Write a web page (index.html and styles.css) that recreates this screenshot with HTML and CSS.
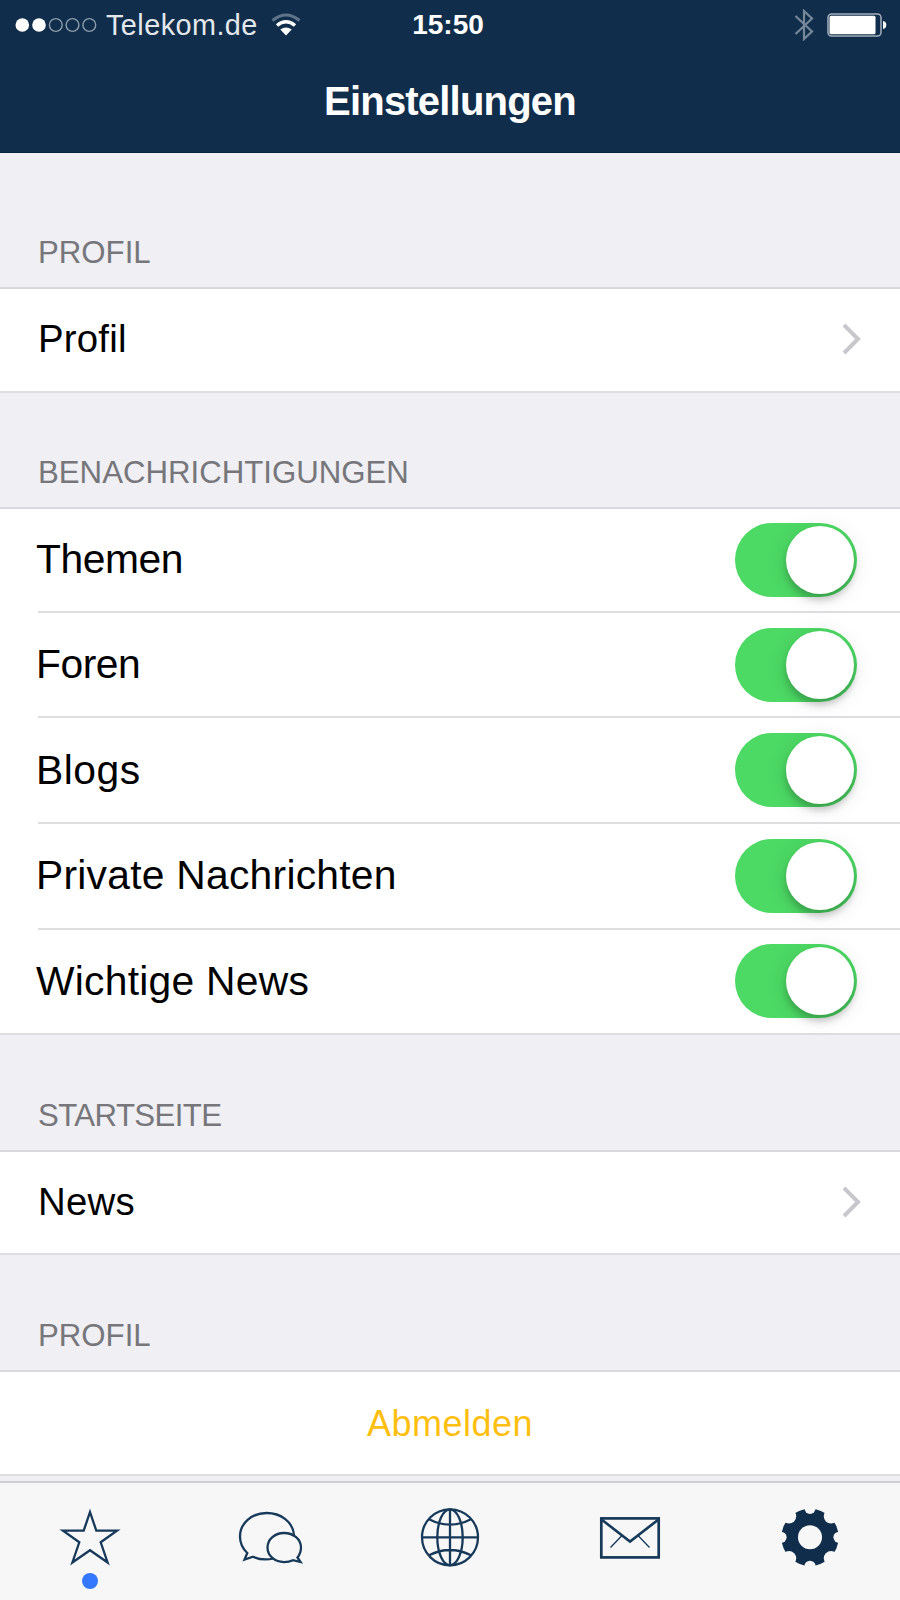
FILE: index.html
```html
<!DOCTYPE html>
<html lang="de">

<head>
  <title>Einstellungen</title>
  <meta charset="utf-8" />
  <meta name="viewport" content="width=device-width, initial-scale=1.0" />
  <link rel="stylesheet" href="styles.css">
</head>

<body>
  <header class="top">
    <div class="status">
      <div class="status-left">
        <svg class="signal" width="84" height="16" viewBox="0 0 84 16">
          <circle cx="7.3" cy="8" r="6.8" fill="#fff" />
          <circle cx="24" cy="8" r="6.8" fill="#fff" />
          <g fill="none" stroke="#8c9cab" stroke-width="1.4">
            <circle cx="40.8" cy="8" r="6.4" />
            <circle cx="57.5" cy="8" r="6.4" />
            <circle cx="74.3" cy="8" r="6.4" />
          </g>
        </svg>
        <span class="carrier">Telekom.de</span>
        <svg class="wifi" width="30" height="24" viewBox="0 0 30 24">
          <path d="M1.5 7.5Q15-3.5 28.5 7.5" fill="none" stroke="#5f7489" stroke-width="3" />
          <path d="M6 12.5Q15 5 24 12.5" fill="none" stroke="#fff" stroke-width="3.4" />
          <path d="M9.3 16.5Q15 12.5 20.7 16.5L15 22.5z" fill="#fff" />
        </svg>
      </div>
      <span class="time">15:50</span>
      <div class="status-right">
        <svg width="20" height="32" viewBox="0 0 20 32">
          <path d="M1.5 7L18 22.5L10 30V2L18 9.5L1.5 25" fill="none" stroke="#76889a" stroke-width="2.2" />
        </svg>
        <svg width="60" height="24" viewBox="0 0 60 24">
          <rect x="1" y="1" width="53" height="22" rx="3.5" fill="none" stroke="#a3b0bc" stroke-width="1.5" />
          <rect x="2.5" y="2.7" width="46" height="18.6" rx="1.5" fill="#fff" />
          <path d="M56 8Q59.3 8.5 59.3 12T56 16z" fill="#fff" />
        </svg>
      </div>
    </div>
    <h1>Einstellungen</h1>
  </header>

  <main>
    <h2 class="first">PROFIL</h2>
    <ul>
      <li class="link">Profil
        <svg class="chevron" width="20" height="32" viewBox="0 0 20 32">
          <path d="M2 2L16 16L2 30" />
        </svg>
      </li>
    </ul>

    <h2>BENACHRICHTIGUNGEN</h2>
    <ul class="switches">
      <li class="tight">Themen<span class="switch"></span></li>
      <li class="tight">Foren<span class="switch"></span></li>
      <li class="wide">Blogs<span class="switch"></span></li>
      <li>Private Nachrichten<span class="switch"></span></li>
      <li>Wichtige News<span class="switch"></span></li>
    </ul>

    <h2 class="start">STARTSEITE</h2>
    <ul>
      <li class="link">News
        <svg class="chevron" width="20" height="32" viewBox="0 0 20 32">
          <path d="M2 2L16 16L2 30" />
        </svg>
      </li>
    </ul>

    <h2>PROFIL</h2>
    <ul>
      <li class="logout">Abmelden</li>
    </ul>
  </main>

  <nav class="tabs">
    <svg viewBox="0 0 180 116">
      <path d="M90 28L96.3 46.7H117L100.7 58.3L107.6 78.5L90 66.2L72.4 78.5L79.3 58.3L63 46.7H83.7z" />
      <circle class="dot" cx="90" cy="97" r="8" />
    </svg>
    <svg viewBox="0 0 180 116">
      <path d="M114 51C113 38 101 29 86.5 29C71.5 29 60 39.5 60 52.5C60 59 62.5 64.5 67.3 69L64.5 75.5L73 72.7C79 75.5 87 76 93.5 74.5" />
      <path d="M117.5 73.5L120.5 78L113 76.2C110 77.7 107 78.1 104 78.1C95 78.1 87.5 72 87.5 63.5C87.5 55 95 49 104 49C113.5 49 121 55 121 63.5C121 67.5 119.5 71 117.5 73.5z" />
    </svg>
    <svg viewBox="0 0 180 116">
      <circle cx="90" cy="53.3" r="28" />
      <ellipse cx="90" cy="53.3" rx="12.7" ry="28" />
      <path d="M90 25.3V81.3M62 53.3H118M69 35.3Q90 46 111 35.3M69 71.3Q90 60.7 111 71.3" />
    </svg>
    <svg viewBox="0 0 180 116">
      <rect x="61.3" y="34.4" width="57.4" height="39" stroke-width="2.7" />
      <path d="M61.5 35.5L90 57.5L118.5 35.5" stroke-width="2.6" />
      <path d="M82 51.5L70.5 63.5M98 51.5L109.5 63.5" stroke-width="1.3" />
    </svg>
    <svg viewBox="0 0 180 116">
      <circle class="gear" cx="90" cy="53.3" r="28.6" />
      <g class="cut">
        <circle cx="90" cy="53.3" r="12" />
        <circle cx="90" cy="24.3" r="5.6" />
        <circle cx="90" cy="82.3" r="5.6" />
        <circle cx="61" cy="53.3" r="5.6" />
        <circle cx="119" cy="53.3" r="5.6" />
        <circle cx="111" cy="32.3" r="7.2" />
        <circle cx="111" cy="74.3" r="7.2" />
        <circle cx="69" cy="32.3" r="7.2" />
        <circle cx="69" cy="74.3" r="7.2" />
      </g>
    </svg>
  </nav>
</body>

</html>
```
FILE: styles.css
```css
* {
  box-sizing: border-box;
}

body {
  margin: 0;
  width: 900px;
  height: 1600px;
  display: flex;
  flex-direction: column;
  overflow: hidden;
  background: #efeff4;
  color: #000;
  font-family: "Liberation Sans", Arial, sans-serif;
}

.top {
  height: 153px;
  flex: none;
  background: #102e4b;
  border-bottom: 1px solid #0b2440;
  color: #fff;
}

.status {
  display: grid;
  grid-template-columns: 1fr auto 1fr;
  align-items: center;
  height: 49px;
  padding: 0 13px 0 15px;
  font-size: 28.8px;
}

.status-left,
.status-right {
  display: flex;
  align-items: center;
}

.status-right {
  justify-content: flex-end;
  gap: 13px;
}

.carrier {
  margin: 2px 13px 0 7px;
  color: #e4e8ec;
  letter-spacing: 0.45px;
}

.time {
  margin: 1px 6px 0 0;
  font-weight: bold;
  font-size: 28px;
}

h1 {
  margin: 0;
  padding-top: 29px;
  font-size: 40px;
  line-height: 46px;
  letter-spacing: -0.8px;
  text-align: center;
}

main {
  flex: 1;
}

h2 {
  display: flex;
  align-items: flex-end;
  height: 114.6px;
  margin: 0;
  padding: 0 38px 16px;
  color: #76767b;
  font-size: 31.2px;
  font-weight: normal;
  line-height: 36px;
}

h2.first {
  height: 134px;
}

h2.start {
  letter-spacing: -0.6px;
}

ul {
  margin: 0;
  padding: 0;
  list-style: none;
  background: #fff;
  border-top: 2px solid #d9d9dd;
  border-bottom: 2px solid #dedee2;
}

li {
  display: flex;
  align-items: center;
  justify-content: space-between;
  height: 101.6px;
  padding: 0 38px;
  font-size: 38.4px;
}

.link {
  padding-bottom: 2px;
  letter-spacing: 0.2px;
}

.chevron path {
  fill: none;
  stroke: #c7c7cc;
  stroke-width: 4;
}

.switches li {
  height: 105.6px;
  margin-left: 38px;
  padding: 0 43px 0 0;
  border-bottom: 2px solid #dedee0;
  font-size: 40.8px;
  letter-spacing: 0.25px;
  text-indent: -2px;
}

.switches .tight {
  letter-spacing: -0.45px;
}

.switches .wide {
  letter-spacing: 0.5px;
}

.switches li:first-child,
.switches li:last-child {
  height: 103.6px;
}

.switches li:last-child {
  border-bottom: 0;
}

.switch {
  display: flex;
  justify-content: flex-end;
  width: 122px;
  height: 74px;
  padding: 3px;
  border-radius: 38px;
  background: #4cd964;
}

.switch::after {
  content: "";
  width: 68px;
  height: 68px;
  border-radius: 50%;
  background: #fff;
  box-shadow: 0 6px 7px rgba(0, 0, 0, 0.2), 0 3px 22px rgba(0, 0, 0, 0.1);
}

.logout {
  padding-top: 3px;
  justify-content: center;
  color: #ffbf10;
  font-size: 36px;
  letter-spacing: 0.5px;
}

.tabs {
  display: flex;
  flex: none;
  height: 119px;
  padding-top: 1px;
  border-top: 2px solid #cfcfd3;
  background: #f7f7f7;
}

.tabs svg {
  width: 180px;
  height: 116px;
  fill: none;
  stroke: #17395a;
  stroke-width: 2.3;
}

.tabs .dot {
  fill: #3478ff;
  stroke: none;
}

.tabs .gear {
  fill: #102e4b;
  stroke: none;
}

.tabs .cut {
  fill: #f7f7f7;
  stroke: none;
}
```
